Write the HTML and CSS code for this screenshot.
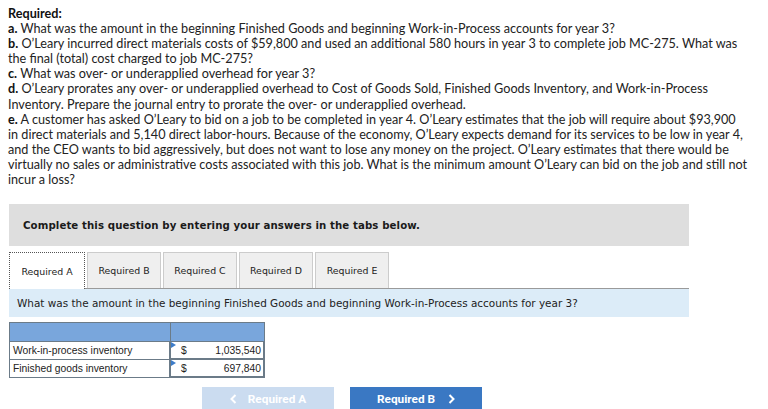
FILE: index.html
```html
<!DOCTYPE html>
<html>
<head>
<meta charset="utf-8">
<link rel="stylesheet" href="styles.css">
</head>
<body>
<div class="page">
  <div class="question">
    <p class="para"><b>Required:</b></p>
    <p class="para"><b>a.</b> What was the amount in the beginning Finished Goods and beginning Work-in-Process accounts for year 3?</p>
    <p class="para"><b>b.</b> O’Leary incurred direct materials costs of $59,800 and used an additional 580 hours in year 3 to complete job MC-275. What was<br>the final (total) cost charged to job MC-275?</p>
    <p class="para"><b>c.</b> What was over- or underapplied overhead for year 3?</p>
    <p class="para"><b>d.</b> O’Leary prorates any over- or underapplied overhead to Cost of Goods Sold, Finished Goods Inventory, and Work-in-Process<br>Inventory. Prepare the journal entry to prorate the over- or underapplied overhead.</p>
    <p class="para"><b>e.</b> A customer has asked O’Leary to bid on a job to be completed in year 4. O’Leary estimates that the job will require about $93,900<br>in direct materials and 5,140 direct labor-hours. Because of the economy, O’Leary expects demand for its services to be low in year 4,<br>and the CEO wants to bid aggressively, but does not want to lose any money on the project. O’Leary estimates that there would be<br>virtually no sales or administrative costs associated with this job. What is the minimum amount O’Leary can bid on the job and still not<br>incur a loss?</p>
  </div>

  <div class="panel">
    <div class="banner">Complete this question by entering your answers in the tabs below.</div>
    <div class="tabs">
      <div class="tab active">Required A</div>
      <div class="tab">Required B</div>
      <div class="tab">Required C</div>
      <div class="tab">Required D</div>
      <div class="tab">Required E</div>
    </div>
    <div class="prompt">What was the amount in the beginning Finished Goods and beginning Work-in-Process accounts for year 3?</div>
    <table class="grid">
      <tr class="head"><td class="c1"></td><td class="c2"></td></tr>
      <tr><td class="c1">Work-in-process inventory</td><td class="c2 input"><span class="flag"></span><span class="cur">$</span><span class="val">1,035,540</span></td></tr>
      <tr><td class="c1">Finished goods inventory</td><td class="c2 input"><span class="flag"></span><span class="cur">$</span><span class="val">697,840</span></td></tr>
    </table>
    <div class="nav">
      <div class="btn disabled"><svg class="chev" width="7" height="10" viewBox="0 0 7 10"><polyline points="5.5,1 1.5,5 5.5,9" fill="none" stroke="#ffffff" stroke-width="2"/></svg>Required A</div>
      <div class="btn primary">Required B<svg class="chev right" width="7" height="10" viewBox="0 0 7 10"><polyline points="1.5,1 5.5,5 1.5,9" fill="none" stroke="#ffffff" stroke-width="2"/></svg></div>
    </div>
  </div>
</div>
</body>
</html>
```
FILE: styles.css
```css
html, body {
  margin: 0;
  padding: 0;
  background: #ffffff;
}
.page {
  width: 768px;
  height: 409px;
  overflow: hidden;
  padding: 6px 0 0 8px;
  box-sizing: border-box;
}
.question {
  font-family: Lato, "Open Sans", sans-serif;
  font-size: 12.65px;
  line-height: 15.1px;
  color: #222222;
  width: 760px;
  white-space: nowrap;
}
.para {
  margin: 0;
}
.question b {
  font-weight: 700;
  color: #111;
}
.panel {
  margin-top: 17px;
  margin-left: 1px;
  width: 680px;
}
.banner {
  background: #dedede;
  height: 42px;
  display: flex;
  align-items: center;
  padding-left: 14px;
  font-family: "DejaVu Sans", Verdana, sans-serif;
  font-weight: 700;
  font-size: 10.2px;
  color: #1a1a1a;
  letter-spacing: 0.1px;
}
.tabs {
  display: flex;
  gap: 2px;
  margin-top: 6px;
  border-bottom: 1px solid #9a9a9a;
}
.tab {
  width: 72px;
  height: 35px;
  display: flex;
  align-items: center;
  justify-content: center;
  background: #efefef;
  border: 1px solid #cccccc;
  border-bottom: none;
  font-family: "DejaVu Sans", Verdana, sans-serif;
  font-size: 9.4px;
  color: #222;
}
.tab.active {
  width: 74px;
  background: #ffffff;
  border: 1px dotted #555;
  border-bottom: none;
  margin-bottom: -1px;
  height: 36px;
}
.prompt {
  background: #dcecf8;
  height: 28px;
  display: flex;
  align-items: center;
  padding-left: 8px;
  font-family: "DejaVu Sans", Verdana, sans-serif;
  font-size: 10.45px;
  color: #222;
}
.grid {
  margin-top: 5px;
  border-collapse: collapse;
  font-family: "Liberation Sans", Arial, sans-serif;
  font-size: 10.3px;
  color: #222;
}
.grid td {
  border: 1px solid #6b7b88;
  height: 16px;
  padding: 0;
}
.grid .head td {
  background: #79a6dc;
  height: 18px;
}
.grid .c1 {
  width: 156px;
  padding-left: 3px;
}
.grid .c2 {
  width: 92px;
  position: relative;
}
.grid .input {
  border-width: 1px 2px 2px 2px;
  border-color: #6b7b88;
}
.flag {
  position: absolute;
  left: 0;
  top: 0;
  width: 0;
  height: 0;
  border-top: 3px solid transparent;
  border-bottom: 3px solid transparent;
  border-left: 5px solid #3d7cc9;
}
.cur {
  display: inline-block;
  padding-left: 10px;
}
.val {
  float: right;
  padding-right: 2px;
}
.nav {
  display: flex;
  gap: 16px;
  margin-top: 9px;
  margin-left: 193px;
}
.btn {
  width: 132px;
  height: 24px;
  display: flex;
  align-items: center;
  justify-content: center;
  font-family: Roboto, "Liberation Sans", sans-serif;
  font-weight: 700;
  font-size: 11.8px;
  color: #ffffff;
}
.btn.disabled {
  background: #cbdcf0;
}
.btn.primary {
  background: #3a78c3;
}
.chev {
  margin-right: 11px;
  display: block;
}
.chev.right {
  margin-right: 0;
  margin-left: 13px;
}
```
